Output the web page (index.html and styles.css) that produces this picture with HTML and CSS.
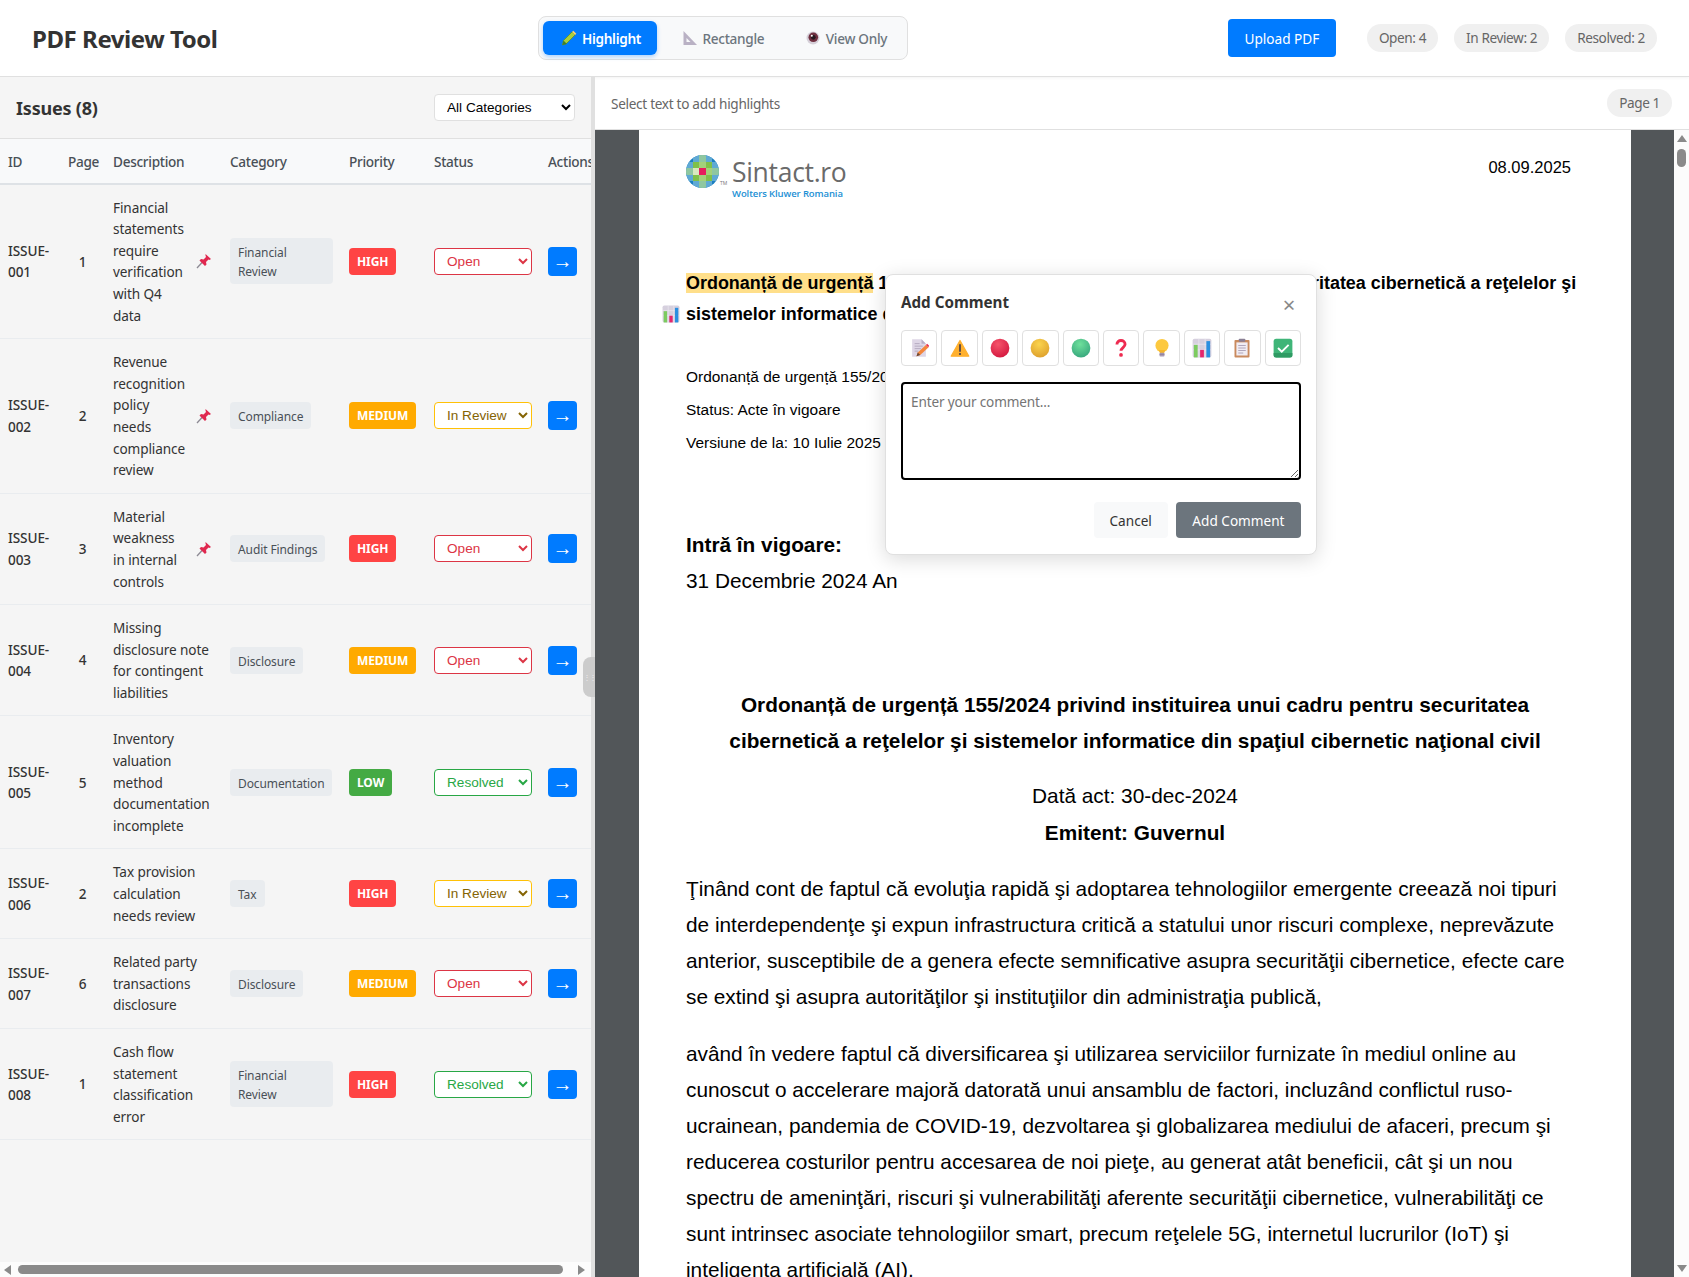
FILE: index.html
```html
<!DOCTYPE html>
<html lang="en">
<head>
    <meta charset="UTF-8">
    <meta name="viewport" content="width=device-width, initial-scale=1.0">
    <title>PDF Review Tool</title>
    <link rel="stylesheet" href="styles.css">
</head>
<body>
    <!-- Emoji style icons, reused with <use> -->
    <svg class="icon-defs" width="0" height="0" aria-hidden="true">
        <defs>
            <radialGradient id="ball-red" cx="40%" cy="30%" r="75%"><stop offset="0" stop-color="#f5546a"/><stop offset="1" stop-color="#d4183f"/></radialGradient>
            <radialGradient id="ball-yellow" cx="45%" cy="30%" r="75%"><stop offset="0" stop-color="#fbd44e"/><stop offset="1" stop-color="#dd9f2c"/></radialGradient>
            <radialGradient id="ball-green" cx="45%" cy="30%" r="75%"><stop offset="0" stop-color="#6fe09c"/><stop offset="1" stop-color="#36a67c"/></radialGradient>
            <symbol id="i-memo" viewBox="0 0 32 32">
                <path d="M5 2h15l7 7v21H5z" fill="#ded6e6"/>
                <path d="M20 2l7 7h-7z" fill="#b9aec6"/>
                <path d="M9 9h8M9 13h13M9 17h10M9 21h6" stroke="#b5abc0" stroke-width="1.6"/>
                <path d="M12 29l2-6 13-12 4 4-13 12z" fill="#f4863b"/>
                <path d="M27 11l2-2 3 3-1 3z" fill="#e8304f"/>
                <path d="M12 29l2-6 4 4z" fill="#6b4a3a"/>
            </symbol>
            <symbol id="i-warning" viewBox="0 0 32 32">
                <path d="M16 4L30 29H2z" fill="#ffb02e" stroke="#ffb02e" stroke-width="2" stroke-linejoin="round"/>
                <path d="M16 11v10" stroke="#433b4b" stroke-width="2.6" stroke-linecap="round"/>
                <circle cx="16" cy="25.5" r="1.7" fill="#433b4b"/>
            </symbol>
            <symbol id="i-red" viewBox="0 0 32 32"><circle cx="16" cy="16" r="15" fill="url(#ball-red)"/></symbol>
            <symbol id="i-yellow" viewBox="0 0 32 32"><circle cx="16" cy="16" r="15" fill="url(#ball-yellow)"/></symbol>
            <symbol id="i-green" viewBox="0 0 32 32"><circle cx="16" cy="16" r="15" fill="url(#ball-green)"/></symbol>
            <symbol id="i-question" viewBox="0 0 32 32">
                <path d="M9.500 10.500C9.500 6.500 12.500 4 16 4s6.500 2.400 6.500 6c0 5-6.500 5.500-6.500 10.500" fill="none" stroke="#ee2b50" stroke-width="4.600"/>
                <circle cx="16" cy="27" r="3" fill="#ee2b50"/>
            </symbol>
            <symbol id="i-bulb" viewBox="0 0 32 32">
                <circle cx="16" cy="12" r="10.500" fill="#fdc93f"/>
                <path d="M11 19h10l-1.500 5h-7z" fill="#f5b62f"/>
                <rect x="12" y="23.500" width="8" height="6" rx="1.500" fill="#a99bb5"/>
                <path d="M12 26h8" stroke="#7d6f8c" stroke-width="1"/>
            </symbol>
            <symbol id="i-chart" viewBox="0 0 32 32">
                <rect x="1" y="1" width="30" height="30" rx="3" fill="#d6d0de"/>
                <path d="M1 10h30M1 19h30M11 1v30M21 1v30" stroke="#efebf3" stroke-width="1"/>
                <rect x="3" y="11" width="6" height="20" fill="#7ccb5f"/>
                <rect x="13" y="19" width="6" height="12" fill="#e4266d"/>
                <rect x="23" y="5" width="6" height="26" fill="#2a8fe0"/>
            </symbol>
            <symbol id="i-clip" viewBox="0 0 32 32">
                <rect x="4" y="3" width="24" height="28" rx="1.500" fill="#c98a5e"/>
                <path d="M7 7h18v21H7z" fill="#f0ecf3"/>
                <rect x="11" y="1" width="10" height="5" rx="1" fill="#8a7f94"/>
                <path d="M10 12h12M10 16h12M10 20h12M10 24h8" stroke="#a79cb2" stroke-width="1.400"/>
            </symbol>
            <symbol id="i-check" viewBox="0 0 32 32">
                <rect x="1" y="1" width="30" height="30" rx="4" fill="#3fb578"/>
                <path d="M1 24h30v3a4 4 0 0 1-4 4H5a4 4 0 0 1-4-4z" fill="#2f9a63"/>
                <path d="M8 16l6 6 11-11" fill="none" stroke="#fff" stroke-width="3"/>
            </symbol>
            <symbol id="i-pencil" viewBox="0 0 16 16">
                <path d="M1.500 15l1-4.500L11 2l3 3-8.500 8.500z" fill="#a8cf3c" stroke="#5f8f2b" stroke-width=".8"/>
                <path d="M11 2l1.300-1.300 3 3L14 5z" fill="#ffd36a"/>
                <path d="M1.500 15l1-4.500 3.500 3.500z" fill="#3f7f2f"/>
            </symbol>
            <symbol id="i-ruler" viewBox="0 0 16 16">
                <path d="M1.500 1v14H15z" fill="#b9b1c4"/>
                <path d="M4.500 8v4h4z" fill="#f8f9fa"/>
            </symbol>
            <symbol id="i-eye" viewBox="0 0 16 16">
                <circle cx="8" cy="8" r="6.500" fill="#d5cfd8"/>
                <circle cx="8.300" cy="7.300" r="4.800" fill="#6f3040"/>
                <circle cx="8.300" cy="7.300" r="2.400" fill="#25181f"/>
                <circle cx="6.800" cy="5.800" r="1" fill="#fff"/>
            </symbol>
            <symbol id="i-pin" viewBox="0 0 16 16">
                <path d="M1 15l5.500-6" stroke="#8d8a94" stroke-width="1.300"/>
                <path d="M9.500 1l5.500 5-1.500 1-1-.5-2.500 2.500.5 2.500-1.500 1.500L3.500 7.500 5 6l2.500.5L10 4l-.5-1.500z" fill="#e0284f"/>
            </symbol>
        </defs>
    </svg>

    <header class="app-header">
        <h1 class="app-title">PDF Review Tool</h1>
        <div class="mode-group">
            <button class="mode-btn active"><svg class="mode-icon"><use href="#i-pencil"/></svg>Highlight</button>
            <button class="mode-btn"><svg class="mode-icon"><use href="#i-ruler"/></svg>Rectangle</button>
            <button class="mode-btn"><svg class="mode-icon"><use href="#i-eye"/></svg>View Only</button>
        </div>
        <div class="header-right">
            <button class="upload-btn">Upload PDF</button>
            <div class="stats">
                <span class="pill">Open: 4</span>
                <span class="pill">In Review: 2</span>
                <span class="pill">Resolved: 2</span>
            </div>
        </div>
    </header>

    <main class="workspace">
        <aside class="sidebar">
            <div class="sidebar-head">
                <h2 class="sidebar-title">Issues (8)</h2>
                <select class="category-filter">
                    <option>All Categories</option>
                    <option>Financial Review</option>
                    <option>Compliance</option>
                </select>
            </div>
            <div class="table-wrap">
                <table class="issues">
                    <thead>
                        <tr>
                            <th class="col-id">ID</th>
                            <th class="col-page">Page</th>
                            <th class="col-desc">Description</th>
                            <th class="col-cat">Category</th>
                            <th class="col-pri">Priority</th>
                            <th class="col-status">Status</th>
                            <th class="col-act">Actions</th>
                        </tr>
                    </thead>
                    <tbody>
                        <tr>
                            <td class="issue-id">ISSUE-001</td>
                            <td class="issue-page">1</td>
                            <td><div class="desc"><span class="desc-text">Financial statements require verification with Q4 data</span><svg class="pin"><use href="#i-pin"/></svg></div></td>
                            <td><span class="tag">Financial Review</span></td>
                            <td><span class="badge high">HIGH</span></td>
                            <td><select class="status open"><option>Open</option><option>In Review</option><option>Resolved</option></select></td>
                            <td><button class="go-btn">→</button></td>
                        </tr>
                        <tr>
                            <td class="issue-id">ISSUE-002</td>
                            <td class="issue-page">2</td>
                            <td><div class="desc"><span class="desc-text">Revenue recognition policy needs compliance review</span><svg class="pin"><use href="#i-pin"/></svg></div></td>
                            <td><span class="tag">Compliance</span></td>
                            <td><span class="badge medium">MEDIUM</span></td>
                            <td><select class="status review"><option>In Review</option><option>Open</option><option>Resolved</option></select></td>
                            <td><button class="go-btn">→</button></td>
                        </tr>
                        <tr>
                            <td class="issue-id">ISSUE-003</td>
                            <td class="issue-page">3</td>
                            <td><div class="desc"><span class="desc-text">Material weakness in internal controls</span><svg class="pin"><use href="#i-pin"/></svg></div></td>
                            <td><span class="tag">Audit Findings</span></td>
                            <td><span class="badge high">HIGH</span></td>
                            <td><select class="status open"><option>Open</option><option>In Review</option><option>Resolved</option></select></td>
                            <td><button class="go-btn">→</button></td>
                        </tr>
                        <tr>
                            <td class="issue-id">ISSUE-004</td>
                            <td class="issue-page">4</td>
                            <td><div class="desc"><span class="desc-text">Missing disclosure note for contingent liabilities</span></div></td>
                            <td><span class="tag">Disclosure</span></td>
                            <td><span class="badge medium">MEDIUM</span></td>
                            <td><select class="status open"><option>Open</option><option>In Review</option><option>Resolved</option></select></td>
                            <td><button class="go-btn">→</button></td>
                        </tr>
                        <tr>
                            <td class="issue-id">ISSUE-005</td>
                            <td class="issue-page">5</td>
                            <td><div class="desc"><span class="desc-text">Inventory valuation method documentation incomplete</span></div></td>
                            <td><span class="tag">Documentation</span></td>
                            <td><span class="badge low">LOW</span></td>
                            <td><select class="status resolved"><option>Resolved</option><option>Open</option><option>In Review</option></select></td>
                            <td><button class="go-btn">→</button></td>
                        </tr>
                        <tr>
                            <td class="issue-id">ISSUE-006</td>
                            <td class="issue-page">2</td>
                            <td><div class="desc"><span class="desc-text">Tax provision calculation needs review</span></div></td>
                            <td><span class="tag">Tax</span></td>
                            <td><span class="badge high">HIGH</span></td>
                            <td><select class="status review"><option>In Review</option><option>Open</option><option>Resolved</option></select></td>
                            <td><button class="go-btn">→</button></td>
                        </tr>
                        <tr>
                            <td class="issue-id">ISSUE-007</td>
                            <td class="issue-page">6</td>
                            <td><div class="desc"><span class="desc-text">Related party transactions disclosure</span></div></td>
                            <td><span class="tag">Disclosure</span></td>
                            <td><span class="badge medium">MEDIUM</span></td>
                            <td><select class="status open"><option>Open</option><option>In Review</option><option>Resolved</option></select></td>
                            <td><button class="go-btn">→</button></td>
                        </tr>
                        <tr>
                            <td class="issue-id">ISSUE-008</td>
                            <td class="issue-page">1</td>
                            <td><div class="desc"><span class="desc-text">Cash flow statement classification error</span></div></td>
                            <td><span class="tag">Financial Review</span></td>
                            <td><span class="badge high">HIGH</span></td>
                            <td><select class="status resolved"><option>Resolved</option><option>Open</option><option>In Review</option></select></td>
                            <td><button class="go-btn">→</button></td>
                        </tr>
                    </tbody>
                </table>
            </div>
            <div class="hscroll">
                <span class="arrow-left"></span>
                <span class="hscroll-thumb"></span>
                <span class="arrow-right"></span>
            </div>
            <div class="resize-handle">⋮⋮</div>
        </aside>

        <section class="viewer">
            <div class="viewer-bar">
                <span class="hint">Select text to add highlights</span>
                <span class="pill">Page 1</span>
            </div>
            <div class="viewer-body">
                <div class="pdf-area">
                    <article class="pdf-page">
                        <div class="pdf-top">
                            <div class="logo">
                                <svg class="logo-mark" viewBox="0 0 33 33">
                                    <defs><clipPath id="logo-clip"><circle cx="16.500" cy="16.500" r="16.500"/></clipPath></defs>
                                    <g clip-path="url(#logo-clip)">
                                        <rect width="33" height="33" fill="#1b7fc0"/>
                                        <rect x="7" y="0" width="19" height="33" fill="#5fa9d4"/>
                                        <rect x="0" y="7" width="33" height="19" fill="#5fa9d4"/>
                                        <rect x="7" y="7" width="19" height="19" fill="#7fc04a"/>
                                        <rect x="13" y="0" width="7" height="33" fill="#8fc7a0"/>
                                        <rect x="0" y="13" width="33" height="7" fill="#8fc7a0"/>
                                        <rect x="7" y="13" width="19" height="7" fill="#a3d07a"/>
                                        <rect x="13" y="7" width="7" height="19" fill="#a3d07a"/>
                                        <rect x="7" y="13" width="6" height="7" fill="#d8e8c0"/>
                                        <rect x="13" y="13" width="7" height="7" fill="#e61c5d"/>
                                    </g>
                                </svg>
                                <span class="logo-tm">TM</span>
                                <div class="logo-words">
                                    <span class="logo-name">Sintact.ro</span>
                                    <span class="logo-sub">Wolters Kluwer Romania</span>
                                </div>
                            </div>
                            <span class="pdf-date">08.09.2025</span>
                        </div>

                        <div class="pdf-title">
                            <span class="mark">Ordonanță de urgență</span> 155/2024 privind instituirea unui cadru pentru securitatea cibernetică a reţelelor şi<br>
                            sistemelor informatice din spaţiul cibernetic naţional civil
                            <svg class="mark-icon"><use href="#i-chart"/></svg>
                        </div>

                        <div class="pdf-meta">
                            <div>Ordonanță de urgență 155/2024 privind instituirea unui cadru</div>
                            <div>Status: Acte în vigoare</div>
                            <div>Versiune de la: 10 Iulie 2025</div>
                        </div>

                        <div class="pdf-force">
                            <div class="pdf-strong">Intră în vigoare:</div>
                            <div>31 Decembrie 2024 An</div>
                        </div>

                        <div class="pdf-heading">
                            Ordonanță de urgență 155/2024 privind instituirea unui cadru pentru securitatea<br>
                            cibernetică a reţelelor şi sistemelor informatice din spaţiul cibernetic naţional civil
                        </div>
                        <div class="pdf-act">
                            <div>Dată act: 30-dec-2024</div>
                            <div class="pdf-strong">Emitent: Guvernul</div>
                        </div>

                        <p class="pdf-par">
                            Ţinând cont de faptul că evoluţia rapidă şi adoptarea tehnologiilor emergente creează noi tipuri<br>
                            de interdependenţe şi expun infrastructura critică a statului unor riscuri complexe, neprevăzute<br>
                            anterior, susceptibile de a genera efecte semnificative asupra securităţii cibernetice, efecte care<br>
                            se extind şi asupra autorităţilor şi instituţiilor din administraţia publică,
                        </p>
                        <p class="pdf-par pdf-par-next">
                            având în vedere faptul că diversificarea şi utilizarea serviciilor furnizate în mediul online au<br>
                            cunoscut o accelerare majoră datorată unui ansamblu de factori, incluzând conflictul ruso-<br>
                            ucrainean, pandemia de COVID-19, dezvoltarea şi globalizarea mediului de afaceri, precum şi<br>
                            reducerea costurilor pentru accesarea de noi pieţe, au generat atât beneficii, cât şi un nou<br>
                            spectru de ameninţări, riscuri şi vulnerabilităţi aferente securităţii cibernetice, vulnerabilităţi ce<br>
                            sunt intrinsec asociate tehnologiilor smart, precum reţelele 5G, internetul lucrurilor (IoT) şi<br>
                            inteligenţa artificială (AI),
                        </p>
                    </article>

                    <!-- Comment popup -->
                    <div class="comment-pop">
                        <div class="pop-head">
                            <h3 class="pop-title">Add Comment</h3>
                            <span class="pop-close">×</span>
                        </div>
                        <div class="emoji-row">
                            <button class="emoji-btn"><svg class="emoji"><use href="#i-memo"/></svg></button>
                            <button class="emoji-btn"><svg class="emoji"><use href="#i-warning"/></svg></button>
                            <button class="emoji-btn"><svg class="emoji"><use href="#i-red"/></svg></button>
                            <button class="emoji-btn"><svg class="emoji"><use href="#i-yellow"/></svg></button>
                            <button class="emoji-btn"><svg class="emoji"><use href="#i-green"/></svg></button>
                            <button class="emoji-btn"><svg class="emoji"><use href="#i-question"/></svg></button>
                            <button class="emoji-btn"><svg class="emoji"><use href="#i-bulb"/></svg></button>
                            <button class="emoji-btn"><svg class="emoji"><use href="#i-chart"/></svg></button>
                            <button class="emoji-btn"><svg class="emoji"><use href="#i-clip"/></svg></button>
                            <button class="emoji-btn"><svg class="emoji"><use href="#i-check"/></svg></button>
                        </div>
                        <textarea class="comment-input" placeholder="Enter your comment..."></textarea>
                        <div class="pop-actions">
                            <button class="btn-cancel">Cancel</button>
                            <button class="btn-add">Add Comment</button>
                        </div>
                    </div>
                </div>
                <div class="vscroll">
                    <span class="arrow-up"></span>
                    <span class="vscroll-thumb"></span>
                    <span class="arrow-down"></span>
                </div>
            </div>
        </section>
    </main>
</body>
</html>
```
FILE: styles.css
```css
* {
    box-sizing: border-box;
}

html, body {
    height: 100%;
}

body {
    font-family: "Noto Sans", "Open Sans", sans-serif;
    margin: 0;
    padding: 0;
    height: 100vh;
    display: flex;
    flex-direction: column;
    overflow: hidden;
    color: #333;
    background: #fff;
}

button {
    font-family: inherit;
    cursor: pointer;
}

.icon-defs {
    position: absolute;
}

/* Header */
.app-header {
    height: 77px;
    flex: none;
    display: flex;
    align-items: center;
    padding: 0 32px;
    background: #fff;
    border-bottom: 1px solid #e0e0e0;
    box-shadow: 0 1px 3px rgba(0,0,0,0.05);
}

.app-title {
    margin: 0;
    width: 506px;
    font-size: 24px;
    font-weight: 700;
    letter-spacing: -0.45px;
    color: #333;
}

.mode-group {
    display: flex;
    gap: 6.5px;
    padding: 4px;
    background: #f8f9fa;
    border: 1px solid #e0e0e0;
    border-radius: 8px;
}

.mode-btn {
    display: flex;
    align-items: center;
    gap: 5px;
    height: 34px;
    padding: 0 16px 0 18px;
    border: none;
    border-radius: 6px;
    background: transparent;
    color: #6c757d;
    font-size: 13.6px;
    font-weight: 500;
    letter-spacing: -0.3px;
}

.mode-btn.active {
    background: #007bff;
    color: #fff;
    font-weight: 600;
    box-shadow: 0 2px 4px rgba(0,123,255,0.3);
}

.mode-icon {
    width: 16px;
    height: 16px;
}

.header-right {
    margin-left: auto;
    display: flex;
    align-items: center;
    gap: 31px;
}

.upload-btn {
    width: 108px;
    height: 38px;
    border: none;
    border-radius: 4px;
    background: #007bff;
    color: #fff;
    font-size: 13.6px;
    font-weight: 400;
}

.stats {
    display: flex;
    gap: 16px;
}

.pill {
    padding: 0 12px;
    height: 28px;
    line-height: 28px;
    background: #f0f0f0;
    border-radius: 14px;
    color: #666;
    font-size: 13.6px;
    letter-spacing: -0.4px;
}

/* Layout */
.workspace {
    flex: 1;
    display: flex;
    min-height: 0;
}

.sidebar {
    position: relative;
    width: 595px;
    flex: none;
    display: flex;
    flex-direction: column;
    background: #f5f5f5;
    border-right: 4px solid #e0e0e0;
}

.sidebar-head {
    height: 62px;
    flex: none;
    display: flex;
    align-items: center;
    justify-content: space-between;
    padding: 0 16px;
    border-bottom: 1px solid #e0e0e0;
}

.sidebar-title {
    margin: 0;
    font-size: 18px;
    font-weight: 700;
    letter-spacing: -0.2px;
}

.category-filter {
    width: 141px;
    height: 27px;
    padding: 0 8px;
    background: #fff;
    border: 1px solid #e0e0e0;
    border-radius: 4px;
    font-family: "Liberation Sans", sans-serif;
    font-size: 13.6px;
    color: #000;
}

.table-wrap {
    flex: 1;
    min-height: 0;
    overflow: hidden;
}

/* Issues table */
.issues {
    width: 607px;
    table-layout: fixed;
    border-collapse: collapse;
    font-size: 13.6px;
    line-height: 21.6px;
}

.issues th {
    padding: 12px 8px 10px;
    background: #f8f9fa;
    border-bottom: 2px solid #dee2e6;
    text-align: left;
    font-weight: 500;
    color: #495057;
    letter-spacing: -0.3px;
    white-space: nowrap;
    overflow: hidden;
}

.issues td {
    padding: 12px 8px;
    border-bottom: 1px solid #e9ecef;
    vertical-align: middle;
    letter-spacing: -0.1px;
}

.col-id { width: 60px; }
.col-page { width: 45px; }
.col-desc { width: 117px; }
.col-cat { width: 119px; }
.col-pri { width: 85px; }
.col-status { width: 114px; }
.col-act { width: 67px; }

.issues th.col-page {
    text-align: center;
}

.issues td.issue-id {
    font-weight: 500;
}

.issues td.issue-page {
    text-align: center;
    font-weight: 500;
}

.desc {
    display: flex;
    align-items: center;
}

.desc-text {
    flex: 1;
    min-width: 0;
}

.pin {
    width: 16px;
    height: 16px;
    flex: none;
    margin: 0 2px 0 8px;
}

.tag {
    display: inline-block;
    padding: 5px 8px 3px;
    background: #e9ecef;
    border-radius: 4px;
    color: #495057;
    font-size: 12px;
    line-height: 19px;
    vertical-align: middle;
}

.badge {
    display: inline-block;
    padding: 4px 8px;
    border-radius: 4px;
    color: #fff;
    font-size: 12px;
    font-weight: 700;
    line-height: 19px;
    vertical-align: middle;
}

.badge.high { background: #ff4444; }
.badge.medium { background: #ffaa00; }
.badge.low { background: #44aa44; }

.status {
    display: block;
    width: 100%;
    height: 27px;
    padding: 0 8px;
    background: #fff;
    border: 1px solid #ccc;
    border-radius: 4px;
    font-family: "Liberation Sans", sans-serif;
    font-size: 13.6px;
}

.status.open { color: #dc3545; border-color: #dc3545; }
.status.review { color: #856404; border-color: #ffc107; }
.status.resolved { color: #28a745; border-color: #28a745; }

.go-btn {
    display: block;
    width: 29px;
    height: 29px;
    padding: 0;
    border: none;
    border-radius: 4px;
    background: #007bff;
    color: #fff;
    font-family: "Liberation Sans", sans-serif;
    font-size: 20px;
    line-height: 29px;
}

.hscroll {
    height: 15px;
    flex: none;
    display: flex;
    align-items: center;
    gap: 7px;
    padding: 0 4px;
    background: #fcfcfc;
}

.hscroll-thumb {
    width: 545px;
    height: 9px;
    background: #8a8a8a;
    border-radius: 5px;
}

.arrow-left {
    border: 5px solid transparent;
    border-left: 0;
    border-right: 7px solid #8a8a8a;
}

.arrow-right {
    margin-left: 8px;
    border: 5px solid transparent;
    border-right: 0;
    border-left: 7px solid #8a8a8a;
}

.resize-handle {
    position: absolute;
    top: 50%;
    right: -4px;
    width: 12px;
    height: 40px;
    margin-top: -20px;
    background: #ccc;
    border-radius: 8px 0 0 8px;
    color: #eee;
    font-size: 8px;
    line-height: 40px;
    text-align: right;
    letter-spacing: -2px;
    overflow: hidden;
}

/* PDF viewer */
.viewer {
    flex: 1;
    min-width: 0;
    display: flex;
    flex-direction: column;
}

.viewer-bar {
    height: 53px;
    flex: none;
    display: flex;
    align-items: center;
    justify-content: space-between;
    padding: 0 17px 0 16px;
    border-bottom: 1px solid #e0e0e0;
}

.hint {
    font-size: 13.6px;
    color: #666;
    letter-spacing: -0.3px;
}

.viewer-body {
    flex: 1;
    min-height: 0;
    display: flex;
}

.pdf-area {
    position: relative;
    flex: 1;
    min-width: 0;
    padding: 0 43px 0 44px;
    background: #525659;
    overflow: hidden;
}

.vscroll {
    position: relative;
    width: 15px;
    flex: none;
    background: #fcfcfc;
}

.arrow-up {
    position: absolute;
    top: 5px;
    left: 3px;
    border: 5px solid transparent;
    border-top: 0;
    border-bottom: 7px solid #8a8a8a;
}

.vscroll-thumb {
    position: absolute;
    top: 19px;
    left: 3px;
    width: 9px;
    height: 18px;
    background: #8a8a8a;
    border-radius: 5px;
}

.arrow-down {
    position: absolute;
    bottom: 5px;
    left: 3px;
    border: 5px solid transparent;
    border-bottom: 0;
    border-top: 7px solid #8a8a8a;
}

.pdf-page {
    position: relative;
    height: 100%;
    padding: 25px 47px 0;
    background: #fff;
    color: #000;
    font-family: "Liberation Sans", Arial, sans-serif;
    font-size: 20.8px;
    line-height: 36px;
    white-space: nowrap;
    overflow: hidden;
}

.pdf-top {
    display: flex;
    justify-content: space-between;
    height: 113px;
    margin-right: 13px;
}

.logo {
    display: flex;
    height: 44px;
}

.logo-mark {
    width: 33px;
    height: 33px;
    filter: blur(0.4px);
}

.logo-tm {
    width: 13px;
    margin-top: 24px;
    padding-left: 1px;
    font-family: "Open Sans", sans-serif;
    font-size: 5px;
    line-height: 8px;
    color: #777;
}

.logo-words {
    display: flex;
    flex-direction: column;
}

.logo-name {
    font-family: "Open Sans", sans-serif;
    font-size: 26.5px;
    line-height: 34px;
    color: #6a6a6a;
    letter-spacing: -0.3px;
}

.logo-sub {
    font-family: "Open Sans", sans-serif;
    font-size: 9.5px;
    font-weight: 600;
    line-height: 10px;
    color: #1b8fd4;
    letter-spacing: -0.1px;
}

.pdf-date {
    margin-top: -6px;
    font-size: 16.5px;
    line-height: 36px;
}

.pdf-title {
    position: relative;
    font-size: 17.94px;
    font-weight: 700;
    line-height: 31px;
}

.mark {
    background: #ffdf8a;
}

.mark-icon {
    position: absolute;
    top: 36px;
    left: -24px;
    width: 18px;
    height: 20px;
}

.pdf-meta {
    margin-top: 30px;
    font-size: 15.45px;
    line-height: 33px;
}

.pdf-force {
    margin-top: 68px;
}

.pdf-strong {
    font-weight: 700;
}

.pdf-heading {
    margin-top: 88px;
    text-align: center;
    font-weight: 700;
}

.pdf-act {
    margin-top: 18px;
    text-align: center;
    line-height: 37px;
}

.pdf-par {
    margin: 20px 0 0;
}

.pdf-par-next {
    margin-top: 21px;
}

/* Comment popup */
.comment-pop {
    position: absolute;
    top: 144px;
    left: 290px;
    width: 432px;
    height: 281px;
    padding: 15px;
    background: #fff;
    border: 1px solid #e0e0e0;
    border-radius: 8px;
    box-shadow: 0 4px 20px rgba(0,0,0,0.15);
}

.pop-head {
    display: flex;
    align-items: center;
    justify-content: space-between;
    height: 24px;
    margin-bottom: 16px;
}

.pop-title {
    margin: 0;
    font-size: 15.2px;
    font-weight: 700;
    color: #333;
}

.pop-close {
    width: 24px;
    text-align: center;
    font-size: 22px;
    line-height: 24px;
    color: #888;
    margin-top: 4px;
}

.emoji-row {
    display: grid;
    grid-template-columns: repeat(10, 1fr);
    gap: 4px;
    margin-bottom: 16px;
}

.emoji-btn {
    display: flex;
    align-items: center;
    justify-content: center;
    height: 36px;
    padding: 0;
    background: #fff;
    border: 1px solid #e0e0e0;
    border-radius: 4px;
}

.emoji {
    width: 20px;
    height: 20px;
}

.comment-input {
    display: block;
    width: 100%;
    height: 98px;
    padding: 8px;
    border: 2px solid #000;
    border-radius: 4px;
    font-family: inherit;
    font-size: 13.6px;
    letter-spacing: -0.15px;
    outline: none;
}

.pop-actions {
    display: flex;
    justify-content: flex-end;
    gap: 8px;
    margin-top: 22px;
}

.btn-cancel, .btn-add {
    height: 36px;
    padding: 0 16px;
    border: none;
    border-radius: 4px;
    font-size: 13.6px;
}

.btn-cancel {
    background: #f8f9fa;
    color: #333;
}

.btn-add {
    padding: 0 16.5px;
    background: #6c757d;
    color: #fff;
}
```
